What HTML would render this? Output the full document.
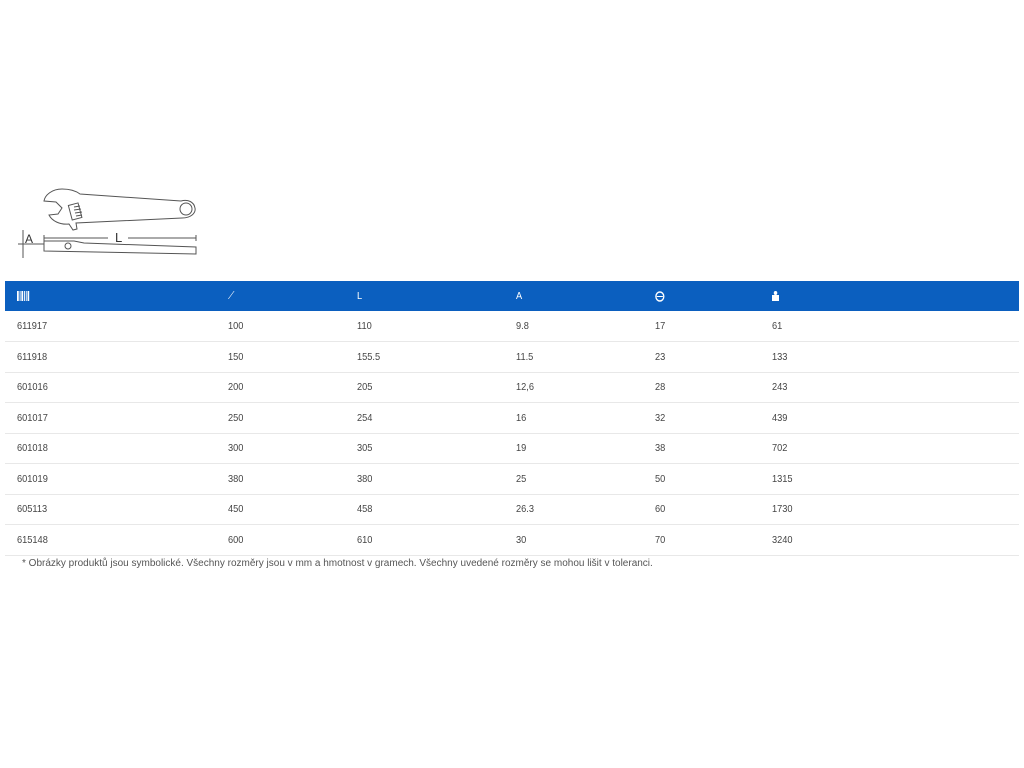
<!DOCTYPE html>
<html><head><meta charset="utf-8"><style>
body{margin:0;background:#fff;width:1024px;height:768px;position:relative;font-family:"Liberation Sans Narrow","Liberation Sans",sans-serif;font-size:10.5px;color:#444;overflow:hidden}
.hdr{position:absolute;left:5px;top:281px;width:1014px;height:30px;background:#0b5fbf}
.row{position:absolute;left:5px;width:1014px;height:30px;border-bottom:1px solid #e8e8e8}
.c{position:absolute;top:0;line-height:30px;transform:scaleX(0.88);transform-origin:left center}
.hdr .c{color:#fff}
.note{position:absolute;left:22px;top:558px;font-size:10px;color:#555;transform:scaleX(1);transform-origin:left}
</style></head><body>
<svg style="position:absolute;left:0;top:180px" width="220" height="90" viewBox="0 0 220 90" fill="none" stroke="#555" stroke-width="1">
<path d="M62 9 C52 9 45 15 44 21 L56 22 L62 28 L58 34 L49 35 C52 41 60 45 69 44 L73 50 L77 49 L76 43 L182 38 C191 38 196 33 195 28 C194 22 188 19 181 21 L80 14 C76 11 70 9 62 9 Z"/>
<circle cx="186" cy="29" r="6"/>
<rect x="70" y="24" width="10" height="15" transform="rotate(-15 75 31)"/>
<path d="M74 27 L80 26 M74 30 L81 29 M75 33 L82 32 M76 36 L82 35"/>
<path d="M44 61 L44 71 L196 74 L196 67 L84 63 L74 61 Z"/>
<circle cx="68" cy="66" r="3"/>
<path d="M44 58 L108 58 M128 58 L196 58 M196 55 L196 61 M44 55 L44 61"/>
<path d="M23 50 L23 78 M18 64 L44 64"/>
<text x="25" y="63" font-family="Liberation Sans" font-size="12" fill="#333" stroke="none">A</text>
<text x="115" y="62" font-family="Liberation Sans" font-size="13" fill="#333" stroke="none">L</text>
</svg>
<div class="hdr">
<div class="c" style="left:12px"><svg width="14" height="10" style="vertical-align:middle"><g fill="#fff"><rect x="0" y="0" width="2" height="10"/><rect x="3" y="0" width="1" height="10"/><rect x="5" y="0" width="2" height="10"/><rect x="8" y="0" width="1" height="10"/><rect x="10" y="0" width="1" height="10"/><rect x="12" y="0" width="2" height="10"/></g></svg></div>
<div class="c" style="left:223px">⟋</div>
<div class="c" style="left:352px">L</div>
<div class="c" style="left:511px">A</div>
<div class="c" style="left:650px"><svg width="11" height="11" style="vertical-align:middle"><circle cx="5.5" cy="5.5" r="4.5" stroke="#fff" stroke-width="1.5" fill="none"/><line x1="2" y1="5.5" x2="9" y2="5.5" stroke="#fff"/></svg></div>
<div class="c" style="left:767px"><svg width="8" height="10" style="vertical-align:middle"><circle cx="4" cy="2" r="2" fill="#fff"/><rect x="0" y="4" width="8" height="6" fill="#fff"/></svg></div>
</div>
<div class="row" style="top:311px"><div class="c" style="left:12px">611917</div><div class="c" style="left:223px">100</div><div class="c" style="left:352px">110</div><div class="c" style="left:511px">9.8</div><div class="c" style="left:650px">17</div><div class="c" style="left:767px">61</div></div>
<div class="row" style="top:342px"><div class="c" style="left:12px">611918</div><div class="c" style="left:223px">150</div><div class="c" style="left:352px">155.5</div><div class="c" style="left:511px">11.5</div><div class="c" style="left:650px">23</div><div class="c" style="left:767px">133</div></div>
<div class="row" style="top:372px"><div class="c" style="left:12px">601016</div><div class="c" style="left:223px">200</div><div class="c" style="left:352px">205</div><div class="c" style="left:511px">12,6</div><div class="c" style="left:650px">28</div><div class="c" style="left:767px">243</div></div>
<div class="row" style="top:403px"><div class="c" style="left:12px">601017</div><div class="c" style="left:223px">250</div><div class="c" style="left:352px">254</div><div class="c" style="left:511px">16</div><div class="c" style="left:650px">32</div><div class="c" style="left:767px">439</div></div>
<div class="row" style="top:433px"><div class="c" style="left:12px">601018</div><div class="c" style="left:223px">300</div><div class="c" style="left:352px">305</div><div class="c" style="left:511px">19</div><div class="c" style="left:650px">38</div><div class="c" style="left:767px">702</div></div>
<div class="row" style="top:464px"><div class="c" style="left:12px">601019</div><div class="c" style="left:223px">380</div><div class="c" style="left:352px">380</div><div class="c" style="left:511px">25</div><div class="c" style="left:650px">50</div><div class="c" style="left:767px">1315</div></div>
<div class="row" style="top:494px"><div class="c" style="left:12px">605113</div><div class="c" style="left:223px">450</div><div class="c" style="left:352px">458</div><div class="c" style="left:511px">26.3</div><div class="c" style="left:650px">60</div><div class="c" style="left:767px">1730</div></div>
<div class="row" style="top:525px"><div class="c" style="left:12px">615148</div><div class="c" style="left:223px">600</div><div class="c" style="left:352px">610</div><div class="c" style="left:511px">30</div><div class="c" style="left:650px">70</div><div class="c" style="left:767px">3240</div></div>
<div class="note">* Obrázky produktů jsou symbolické. Všechny rozměry jsou v mm a hmotnost v gramech. Všechny uvedené rozměry se mohou lišit v toleranci.</div>
</body></html>
